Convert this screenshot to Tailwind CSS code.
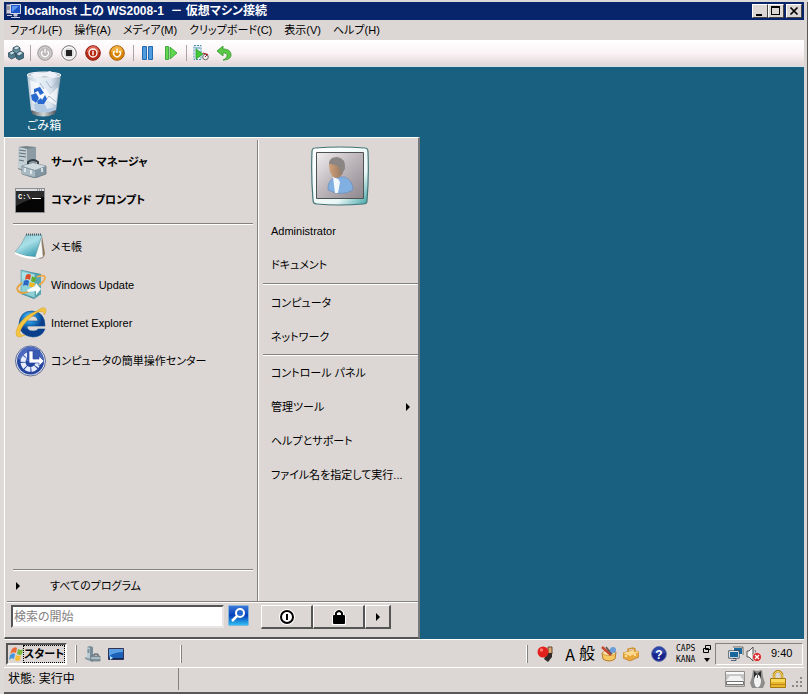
<!DOCTYPE html>
<html lang="ja">
<head>
    <meta charset="UTF-8">
    <meta name="viewport" content="width=device-width, initial-scale=1.0">
    <title>localhost 上の WS2008-1 － 仮想マシン接続</title>
    <script src="https://cdn.jsdelivr.net/npm/@tailwindcss/browser@4"></script>
</head>
<body class="min-h-screen flex flex-col bg-[#dcd7d5] border-t-2 border-l-4 border-[#dedad8] pr-1 text-xs text-black font-['Liberation_Sans','Noto_Sans_CJK_JP',sans-serif] [font-feature-settings:'palt'] shadow-[inset_-1px_-2px_0_#5a5856]">

    <!-- Title bar -->
    <header class="h-[18px] bg-[#08246b] text-white flex items-center pl-[2px] pr-[2px]">
        <svg class="w-4 h-4 shrink-0" viewBox="0 0 16 16">
            <path d="M.5 1.500h5v9h-5z" fill="#c9c9d8" stroke="#777b9a"/>
            <path d="M1 4h4M1 6h4" stroke="#666"/>
            <path d="M4.500 1.500h10v9h-10z" fill="#1c55c8" stroke="#d8dce8"/>
            <path d="M6 3h7L6 9z" fill="#5d95f0"/>
            <path d="M8 11h3v2H8zM5 14.500h9M1 12.500h5" stroke="#c8ccdd" fill="#c8ccdd"/>
        </svg>
        <h1 class="flex-1 ml-[2px] text-xs leading-4 font-bold whitespace-nowrap">localhost 上の WS2008-1 &nbsp;－ 仮想マシン接続</h1>
        <div class="flex">
            <button aria-label="最小化" class="w-4 h-[14px] bg-[#dcd7d5] border border-t-white border-l-white border-r-[#444] border-b-[#444]">
                <svg class="w-full h-full" viewBox="0 0 14 12"><path d="M3 9h6v2H3z"/></svg>
            </button>
            <button aria-label="最大化" class="w-4 h-[14px] bg-[#dcd7d5] border border-t-white border-l-white border-r-[#444] border-b-[#444]">
                <svg class="w-full h-full" viewBox="0 0 14 12"><path d="M2 1h9v9H2zM3 3v6h7V3z" fill-rule="evenodd"/></svg>
            </button>
            <button aria-label="閉じる" class="ml-[2px] w-4 h-[14px] bg-[#dcd7d5] border border-t-white border-l-white border-r-[#444] border-b-[#444]">
                <svg class="w-full h-full" viewBox="0 0 14 12"><path d="M3.500 2.500l7 7M10.500 2.500l-7 7" stroke="#000" stroke-width="1.700"/></svg>
            </button>
        </div>
    </header>

    <!-- Menu bar -->
    <nav class="h-5 flex items-center gap-3 pl-[6px] text-[11px] leading-4 whitespace-nowrap">
        <button>ファイル(F)</button>
        <button>操作(A)</button>
        <button>メディア(M)</button>
        <button>クリップボード(C)</button>
        <button>表示(V)</button>
        <button>ヘルプ(H)</button>
    </nav>

    <!-- Toolbar -->
    <div class="h-[27px] flex items-center pl-1 bg-linear-to-b from-white via-[#fbf3f5] to-[#e2d7d8] border-b border-[#d3e2e4]">
        <button aria-label="Ctrl+Alt+Del">
            <svg class="w-4 h-4" viewBox="0 0 16 16" stroke="#23414d" stroke-width=".7">
                <path d="M5 3l4-2 3 2v4L8 9 5 7z" fill="#6c97a8"/><path d="M5 3l4-2 3 2-4 2z" fill="#d5e6ec"/>
                <path d="M0.500 8l4-2 3 2v4l-4 2-3-2z" fill="#547f92"/><path d="M0.500 8l4-2 3 2-4 2z" fill="#c4dbe3"/>
                <path d="M8 9l4-3 3.500 2v5L11 15l-3-2z" fill="#426f82"/><path d="M8 9l4-3 3.500 2L11 11z" fill="#c4dbe3"/>
            </svg>
        </button>
        <span class="w-px h-4 mx-[6px] bg-[#aaa5a5]"></span>
        <div class="flex gap-2">
            <button aria-label="起動" disabled>
                <svg class="w-4 h-4" viewBox="0 0 16 16"><circle cx="8" cy="8" r="7.300" fill="#bdb8ba" stroke="#a5a0a2"/><circle cx="8" cy="8" r="5.800" fill="none" stroke="#d3cfd0"/><path d="M5.500 6a3.400 3.400 0 1 0 5 0M8 3.800v4" fill="none" stroke="#fff" stroke-width="1.300"/></svg>
            </button>
            <button aria-label="停止">
                <svg class="w-4 h-4" viewBox="0 0 16 16"><circle cx="8" cy="8" r="7.300" fill="#eee" stroke="#777"/><circle cx="8" cy="8" r="5.800" fill="#dedede" stroke="#fff"/><path d="M5 5h6v6H5z" fill="#222"/></svg>
            </button>
            <button aria-label="シャットダウン">
                <svg class="w-4 h-4" viewBox="0 0 16 16"><circle cx="8" cy="8" r="7.300" fill="#b82b17" stroke="#8c1c10"/><path d="M2 7a6 6 0 0 1 12 0q-6 2-12 0" fill="#dd6650"/><circle cx="8" cy="8" r="4" fill="#b52612" stroke="#fff" stroke-width="1.300"/><path d="M8 5.800v4.400" stroke="#fff" stroke-width="1.400"/></svg>
            </button>
            <button aria-label="電源">
                <svg class="w-4 h-4" viewBox="0 0 16 16"><circle cx="8" cy="8" r="7.300" fill="#d98406" stroke="#a65f08"/><path d="M2 7a6 6 0 0 1 12 0q-6 2-12 0" fill="#efae3e"/><path d="M5.500 6a3.400 3.400 0 1 0 5 0M8 3.500v4.500" fill="none" stroke="#fff" stroke-width="1.400"/></svg>
            </button>
        </div>
        <span class="w-px h-4 ml-2 mr-[6px] bg-[#aaa5a5]"></span>
        <div class="flex gap-2">
            <button aria-label="一時停止">
                <svg class="w-4 h-4" viewBox="0 0 16 16" fill="#4f9be0" stroke="#2468ae"><path d="M2.500 1.500h4v13h-4zM8.500 1.500h4v13h-4z"/></svg>
            </button>
            <button aria-label="リセット">
                <svg class="w-4 h-4" viewBox="0 0 16 16" fill="#62d64e" stroke="#2c9c2b" stroke-width=".8"><path d="M1.500 1.500h3v13h-3zM6 2l7 6-7 6z"/></svg>
            </button>
        </div>
        <span class="w-px h-4 mx-[6px] bg-[#aaa5a5]"></span>
        <div class="flex gap-2">
            <button aria-label="スナップショット">
                <svg class="w-4 h-4" viewBox="0 0 16 16"><path d="M1 .5h7v14H1z" fill="#e4f1f8" stroke="#4b91ad" stroke-dasharray="2 1"/><path d="M2 3h5" stroke="#4b91ad"/><path d="M3 4l7 5-7 5z" fill="#43cb37" stroke="#208a25" stroke-width=".7"/><circle cx="12.500" cy="12" r="2.800" fill="#eee" stroke="#666"/><path d="M10 8l5 1.500M12 12l2-2" stroke="#a12"/></svg>
            </button>
            <button aria-label="元に戻す">
                <svg class="w-4 h-4" viewBox="0 0 16 16"><path d="M0 6l6-5v3c5 0 8 2 8 6 0 3-3 5-8 5 3-1 4-3 4-4.500C10 8.500 9 8 6 8v3z" fill="#58c845" stroke="#32952b" stroke-width=".8"/></svg>
            </button>
        </div>
    </div>

    <!-- Guest desktop -->
    <main class="flex-1 flex flex-col justify-between items-start bg-[#195f80]">
        <a href="#" class="w-20 pt-1 flex flex-col items-center text-white">
            <svg class="w-9 h-[46px]" viewBox="0 0 36 46">
                <defs>
                    <linearGradient id="bin"><stop stop-color="#b4c6d6"/><stop offset=".3" stop-color="#e9f0f8"/><stop offset=".7" stop-color="#dbe5ef"/><stop offset="1" stop-color="#8ea5b8"/></linearGradient>
                    <linearGradient id="rim"><stop stop-color="#555b60"/><stop offset=".5" stop-color="#d5d8d8"/><stop offset="1" stop-color="#4c5358"/></linearGradient>
                </defs>
                <path d="M1 3l4 37q13 6 25 0l5-37z" fill="url(#bin)"/>
                <path d="M4 9l9 4-3 7 9-3 5 7 8-8-2 18-9-5-7 6-8-4z" fill="#fff" opacity=".7"/>
                <path d="M20 10l5 7 6-5M17 33l6-8 7 6M14 12l4 6" fill="none" stroke="#a9bacb" stroke-width="1"/>
                <path d="M8 33l9-3 4 8 9-2-1 4q-11 4-20 0z" fill="#b3cae4"/>
                <ellipse cx="18" cy="4" rx="17" ry="3" fill="#b4c3ce" stroke="#eef3f6"/>
                <path d="M4 4l6-3 8 1 6-2 8 4-5 3-8-2-9 2z" fill="#eef2f8"/>
                <path d="M5 39q13 5 25 0l-1 4q-12 5-23 0z" fill="url(#rim)"/>
                <g fill="#2869cf"><path d="M8 18l6-2 4 6-4 2-2-4-4 2z"/><path d="M5 24l5-2 3 5-3 5-4-3z"/><path d="M11 30l4-3 1 2 3-5 2 4-3 5-6 0z"/></g>
            </svg>
            <span class="mt-px leading-4">ごみ箱</span>
        </a>

        <!-- Start menu -->
        <section class="w-[416px] h-[502px] flex flex-col bg-[#dcd7d5] border-t border-l border-white border-r-2 border-b-2 border-r-[#77797a] border-b-[#555] p-[2px] pr-0">
            <div class="flex-1 flex">
                <div class="w-[251px] flex flex-col border-r border-[#858180] pl-[6px] pr-1 text-[11px] whitespace-nowrap">
                    <a href="#" class="h-[38px] mt-[3px] flex items-center pl-[2px] gap-1 font-bold">
                        <svg class="w-8 h-8" viewBox="0 0 32 32">
                            <path d="M3 1l8-1 10 1v23l-8 3-10-4z" fill="#78858b"/><path d="M3 1l9 2v22l-9-3z" fill="#c3cfd4"/><path d="M12 3l9-2v22l-9 3z" fill="#8d9ca4"/>
                            <path d="M4 4l7 1M4 7l7 1M4 10l7 1M4 14l5 1" stroke="#5f6f78" stroke-width="1.200"/>
                            <path d="M13 19v-3q5-4 10 0v3" fill="none" stroke="#343d43" stroke-width="2"/>
                            <path d="M7 20l11-3 13 3v8l-11 4-13-4z" fill="#8297a2" stroke="#5c707a" stroke-width=".7"/><path d="M7 20l11-3 13 3-11 4z" fill="#cfdade"/><path d="M7 21l13 4v6L7 28z" fill="#a9bac3"/><path d="M10 22v4M16 24v4M27 22v4" stroke="#eef3f5" stroke-width="1.500"/>
                        </svg>
                        サーバー マネージャ
                    </a>
                    <a href="#" class="h-[38px] flex items-center pl-[2px] gap-1 font-bold">
                        <svg class="w-8 h-8" viewBox="0 0 32 32">
                            <path d="M.5 4.500h29v24H.5z" fill="#050505" stroke="#8c8e92"/><path d="M1 5h28v2H1z" fill="#dadde1"/><path d="M22 6h6" stroke="#555" stroke-dasharray="1 1"/><path d="M1 7h28v6Q14 14 1 22z" fill="#2b2b2b"/>
                            <text x="3" y="15" font-size="7" fill="#fff" font-family="Liberation Mono">C:\</text><path d="M17 14.500h9" stroke="#fff"/>
                        </svg>
                        コマンド プロンプト
                    </a>
                    <hr class="mt-1 mb-[3px] border-t border-[#858180] border-b border-b-white">
                    <a href="#" class="h-[38px] flex items-center pl-[2px] gap-1">
                        <svg class="w-8 h-8" viewBox="0 0 32 32">
                            <defs><linearGradient id="note" x2=".6" y2="1"><stop stop-color="#8dc5cf"/><stop offset=".5" stop-color="#a9e0e8"/><stop offset="1" stop-color="#3f9fb4"/></linearGradient></defs>
                            <path d="M27 5l3 18-2 4-4 1z" fill="#8d7453"/><path d="M26 4l2 22-9 3z" fill="#f4f7f5" stroke="#aab" stroke-width=".5"/>
                            <path d="M11 4h16l-7 22q-10 0-20-5Q7 14 11 4z" fill="url(#note)" stroke="#6b9fa9" stroke-width=".7"/>
                            <path d="M11 3.500h16" stroke="#4d5e62" stroke-width="2" stroke-dasharray="1 1"/><path d="M0 21q10 5 20 5v2Q9 28 0 23" fill="#fff"/>
                        </svg>
                        メモ帳
                    </a>
                    <a href="#" class="h-[38px] flex items-center pl-[2px] gap-1">
                        <svg class="w-8 h-8" viewBox="0 0 32 32">
                            <path d="M6 1l15 3 5 1v20l-7 5-13-5z" fill="#3b929d"/><path d="M6 1l14 4v24L6 24z" fill="#8ed0d8" stroke="#5b9ba5" stroke-width=".6"/><path d="M20 5l6 1v19l-6 4z" fill="#57a6b0"/><path d="M7 3l12 3v8L7 10z" fill="#bce8eb" opacity=".7"/>
                            <path d="M11 6q3-2 5 0l-1 5q-3-2-5 0z" fill="#dc4c28"/><path d="M17 7q2 2 4 1l-1 5q-2 1-4-1z" fill="#67ab2e"/><path d="M9 12q3-2 5 0l-1 5q-2-2-5 0z" fill="#2d63c4"/><path d="M15 13q3 2 5 1l-1 4q-3 1-5-1z" fill="#f2b621"/>
                            <path d="M7 14q-7 5-4 8 4 4 12 0" fill="none" stroke="#e6a23a" stroke-width="1.800"/><path d="M22 8q8-3 8 1-1 4-6 7" fill="none" stroke="#eeaa48" stroke-width="1.800"/><path d="M12 21l8-4 1-3 5 6-5 6v-4l-8 1z" fill="#f8fcfa"/>
                        </svg>
                        Windows Update
                    </a>
                    <a href="#" class="h-[38px] flex items-center pl-[2px] gap-1">
                        <svg class="w-8 h-8" viewBox="0 0 32 32">
                            <defs><radialGradient id="ie" cx=".4" cy=".25"><stop stop-color="#6ccafa"/><stop offset=".5" stop-color="#1d84cf"/><stop offset="1" stop-color="#0b3f8c"/></radialGradient></defs>
                            <path d="M30 19H12q0 5 6 5 4 0 5-2h7q-3 8-12 8-13-1-14-13Q5 4 17 4q13 1 13 15M12 14h11q-1-5-5-5-5 0-6 5" fill="url(#ie)" fill-rule="evenodd" stroke="#0c4b90" stroke-width=".6"/>
                            <path d="M22 4q8-6 9-1 0 3-2 5 1-5-6-3Q10 13 5 24q-1 5 5 4-9 5-9-2C2 16 12 7 22 4" fill="#f4c640" stroke="#d79a25" stroke-width=".5"/>
                        </svg>
                        Internet Explorer
                    </a>
                    <a href="#" class="h-[38px] flex items-center pl-[2px] gap-1">
                        <svg class="w-8 h-8" viewBox="0 0 32 32">
                            <circle cx="15.500" cy="16" r="15" fill="#dfe4ef" stroke="#5d6b94"/><circle cx="15.500" cy="16" r="13.500" fill="#2444a0"/><path d="M3 14a12.500 12.500 0 0 1 25 0q-12 5-25 0" fill="#4c69bd"/>
                            <circle cx="15.500" cy="17" r="7.500" fill="none" stroke="#e8edfc" stroke-width="5" stroke-dasharray="4.900 1"/>
                            <path d="M12 5h13v10H12z" fill="#3a59b1"/>
                            <path d="M14 6h4v8h6v-3l5 5-5 5v-3H14z" fill="#fff" stroke="#2b4aa6" stroke-width=".7"/>
                        </svg>
                        コンピュータの簡単操作センター
                    </a>
                    <hr class="mt-auto border-t border-[#858180] border-b border-b-white">
                    <button class="h-[30px] flex items-center pl-[3px]">
                        <svg class="w-1 h-2 mr-[30px]" viewBox="0 0 4 8"><path d="M0 0l4 4-4 4z"/></svg>
                        すべてのプログラム
                    </button>
                </div>
                <div class="flex-1 flex flex-col border-l border-white pl-1 text-[11px] whitespace-nowrap">
                    <svg class="w-[60px] h-[60px] mt-[6px] ml-[47px] mb-2" viewBox="0 0 60 60">
                        <defs>
                            <linearGradient id="frame" x2="1" y2="1"><stop stop-color="#fff"/><stop offset=".7" stop-color="#e9f7f6"/><stop offset="1" stop-color="#39a1a4"/></linearGradient>
                            <linearGradient id="pic" x2="1" y2="1"><stop stop-color="#f1eff0"/><stop offset=".5" stop-color="#bbb4b9"/><stop offset="1" stop-color="#8d878e"/></linearGradient>
                            <linearGradient id="face"><stop stop-color="#d1a27b"/><stop offset="1" stop-color="#8f735d"/></linearGradient>
                        </defs>
                        <path d="M5 2q25-2 50 0 3 0 3 4 1 25-1 49 0 3-4 3-24 2-46 0-4 0-4-4-2-24-1-48 0-4 3-4z" fill="url(#frame)" stroke="#467477" stroke-width="1.200"/>
                        <path d="M6.500 6.500h47v46h-47z" fill="url(#pic)" stroke="#4e5354"/>
                        <path d="M18 44q-1-11 9-13h8q8 4 8 13-12 7-25 0" fill="#82afe2" stroke="#6388b6" stroke-width=".6"/><path d="M23 31l5 2 2 3-2 11h-3z" fill="#f3f8fd"/>
                        <path d="M19 20q0-8 8-8 8 1 7 11-2 9-8 9-6-1-7-12" fill="url(#face)"/><path d="M19 18q0-7 8-7 9 1 8 12l-4 5-2-7q-4-3-10-3" fill="#8b8683"/>
                    </svg>
                    <a href="#" class="h-[34px] flex items-center pl-2">Administrator</a>
                    <a href="#" class="h-[34px] flex items-center pl-2">ドキュメント</a>
                    <hr class="my-px border-t border-[#858180] border-b border-b-white">
                    <a href="#" class="h-[34px] flex items-center pl-2">コンピュータ</a>
                    <a href="#" class="h-[34px] flex items-center pl-2">ネットワーク</a>
                    <hr class="border-t border-[#858180] border-b border-b-white">
                    <a href="#" class="h-[34px] flex items-center pl-2">コントロール パネル</a>
                    <a href="#" class="h-[34px] flex items-center justify-between pl-2 pr-2">
                        管理ツール
                        <svg class="w-1 h-2" viewBox="0 0 4 8"><path d="M0 0l4 4-4 4z"/></svg>
                    </a>
                    <a href="#" class="h-[34px] flex items-center pl-2">ヘルプとサポート</a>
                    <a href="#" class="h-[34px] flex items-center pl-2">ファイル名を指定して実行...</a>
                </div>
            </div>
            <div class="h-[34px] flex items-start pt-[3px] pl-1 border-t border-[#858180] shadow-[inset_0_1px_0_#fff]">
                <input type="text" aria-label="検索の開始" placeholder="検索の開始" class="w-[213px] h-[23px] px-px text-xs bg-white border-2 border-t-[#555] border-l-[#555] border-r-[#e9e5e4] border-b-[#e9e5e4] placeholder:text-[#85817f]">
                <button aria-label="検索" class="ml-1">
                    <svg class="w-[21px] h-[21px]" viewBox="0 0 21 21">
                        <defs><linearGradient id="find" x2="0" y2="1"><stop stop-color="#3d7ad8"/><stop offset=".5" stop-color="#0640bb"/><stop offset="1" stop-color="#30c4f3"/></linearGradient></defs>
                        <rect x=".5" y=".5" width="20" height="20" rx="1" fill="url(#find)" stroke="#83b5df"/><circle cx="12" cy="8" r="4" fill="#2467ce" stroke="#fff" stroke-width="2"/><path d="M9 11l-5 5" stroke="#fff" stroke-width="2.500"/>
                    </svg>
                </button>
                <div class="ml-3 flex">
                    <button aria-label="電源" class="w-[52px] h-6 flex items-center justify-center border border-t-white border-l-white border-r-2 border-b-2 border-r-[#555] border-b-[#555]">
                        <svg class="w-4 h-4" viewBox="0 0 16 16"><circle cx="8" cy="8" r="8" fill="#fff"/><circle cx="8" cy="8" r="6" fill="none" stroke="#000" stroke-width="2"/><path d="M8 5v6" stroke="#000" stroke-width="2"/></svg>
                    </button>
                    <button aria-label="ロック" class="w-[52px] h-6 flex items-center justify-center border border-t-white border-l-white border-r-2 border-b-2 border-r-[#555] border-b-[#555]">
                        <svg class="w-4 h-4" viewBox="0 0 16 16"><path d="M3 7V3q5-6 10 0v3h2v10H1V6z" fill="#fff"/><path d="M5 8V4q3-4 6 0v4" fill="none" stroke="#000" stroke-width="2"/><rect x="2" y="6" width="12" height="9" rx="1"/></svg>
                    </button>
                    <button aria-label="その他" class="w-[26px] h-6 flex items-center justify-center border border-t-white border-l-white border-r-2 border-b-2 border-r-[#555] border-b-[#555]">
                        <svg class="w-1 h-2" viewBox="0 0 4 8"><path d="M0 0l4 4-4 4z"/></svg>
                    </button>
                </div>
            </div>
        </section>
    </main>

    <!-- Taskbar -->
    <div class="h-7 flex items-center pl-[2px] pr-px border-t border-white">
        <button class="w-[61px] h-[22px] flex items-center pl-px border-2 border-t-[#555] border-l-[#555] border-r-white border-b-white font-bold text-[11px] whitespace-nowrap">
            <svg class="w-[15px] h-4 shrink-0" viewBox="0 0 15 16"><path d="M3 3q3-3 5-1L7 7Q4 5 1 8z" fill="#eb6a35"/><path d="M9 3q3 2 5 0l-1 5q-2 2-5 0z" fill="#79b83d"/><path d="M1 9q3-3 5-1l-1 5q-3-2-5 1z" fill="#4694dc"/><path d="M7 9q3 2 5 0l-1 5q-3 2-5 0z" fill="#f5bd38"/></svg>
            <span class="outline-1 outline-dotted outline-black leading-4">スタート</span>
        </button>
        <span class="w-[2px] h-[18px] ml-2 bg-white border-r border-[#858180]"></span>
        <button aria-label="サーバー マネージャ" class="ml-2">
            <svg class="w-4 h-4" viewBox="0 0 16 16"><path d="M2 1l3-1 3 1v11l-3 2-3-2z" fill="#788d99"/><path d="M2 1l3 1v11l-3-1z" fill="#b9ccd5"/><path d="M2.500 4h2M2.500 6h2" stroke="#465b66"/><path d="M0 12l8 3" stroke="#8b9ca4" stroke-width="2"/><path d="M9 10V8h4v2" fill="none" stroke="#3f4d54"/><path d="M6 10h9v5H6z" fill="#8396a0" stroke="#5b6c75" stroke-width=".6"/><path d="M6 12h9" stroke="#d7e0e4"/></svg>
        </button>
        <button aria-label="デスクトップの表示" class="ml-[7px]">
            <svg class="w-4 h-4" viewBox="0 0 16 16"><path d="M.5 2.500h15v11H.5z" fill="#1d60b8" stroke="#335"/><path d="M1 3h14v3Q7 6 1 10z" fill="#5a9ee4"/><path d="M1 12h14v1H1z" fill="#0c2a5a"/><path d="M2 10l3 2-3 2z" fill="#aee6ff"/></svg>
        </button>
        <span class="w-[2px] h-[18px] ml-14 bg-white border-r border-[#858180]"></span>

        <!-- Language bar -->
        <span class="w-[2px] h-[18px] ml-auto bg-white border-r border-[#858180]"></span>
        <button aria-label="IME" class="ml-[9px]">
            <svg class="w-4 h-4" viewBox="0 0 16 16"><path d="M11 1h4v7h-4z" fill="#d6a96d" stroke="#643"/><path d="M10 7h5v4l-4 5-4-3z" fill="#302b29"/><circle cx="6" cy="6" r="5.500" fill="#e2201c"/><circle cx="4.500" cy="4" r="1.700" fill="#ff796d"/></svg>
        </button>
        <button class="ml-3 text-base leading-5 font-['Noto_Sans_CJK_JP',sans-serif]">A</button>
        <button class="ml-1 text-base leading-5 whitespace-nowrap">般</button>
        <button aria-label="IME パッド" class="ml-[6px]">
            <svg class="w-4 h-4" viewBox="0 0 16 16"><path d="M1 7l14-1-1 7q-6 4-12 0z" fill="#f5c860" stroke="#b97c27"/><ellipse cx="8" cy="7" rx="6.500" ry="2.500" fill="#fae4a8" stroke="#b97c27" stroke-width=".6"/><path d="M1 1l9 8" stroke="#c64231" stroke-width="2.500"/><path d="M5 1l6 7" stroke="#555" stroke-width="1.500"/><circle cx="12" cy="4" r="3" fill="#6b9ddc"/></svg>
        </button>
        <button aria-label="ツール" class="ml-[6px]">
            <svg class="w-4 h-4" viewBox="0 0 16 16"><path d="M0 7l10-3 6 2v5l-9 4-7-3z" fill="#e9a83e" stroke="#b7782b" stroke-width=".7"/><path d="M0 7l10-3 6 2-9 4z" fill="#fbd98d"/><path d="M5 6V3l5-1 2 1v3" fill="none" stroke="#cf922f" stroke-width="1.500"/><path d="M3 9v2M12 8v2" stroke="#fff2bd" stroke-width="1.500"/></svg>
        </button>
        <button aria-label="ヘルプ" class="ml-3">
            <svg class="w-4 h-4" viewBox="0 0 16 16"><circle cx="8" cy="8" r="7.400" fill="#16248c" stroke="#6974a9"/><path d="M2 7a6 6 0 0 1 12 0q-6 2-12 0" fill="#3049ac"/><text x="8" y="12.500" text-anchor="middle" font-size="12" font-weight="bold" fill="#fff">?</text></svg>
        </button>
        <div class="ml-[9px] w-5 text-[8px] leading-[11px] font-['DejaVu_Sans_Mono',monospace]">
            <button class="block">CAPS</button>
            <button class="block">KANA</button>
        </div>
        <div class="ml-[7px] flex flex-col items-center gap-1">
            <button aria-label="元に戻す"><svg class="block w-2 h-2" viewBox="0 0 8 8"><path d="M2.500.5h5v4h-5zM.5 3.500h5v4h-5z" fill="#dcd7d5" stroke="#000"/></svg></button>
            <button aria-label="オプション"><svg class="block w-[6px] h-[6px]" viewBox="0 0 6 6"><path d="M0 1h6L3 5z"/></svg></button>
        </div>

        <!-- Notification area -->
        <div class="ml-1 w-[88px] h-[22px] flex items-center pl-3 border border-t-[#858180] border-l-[#858180] border-r-white border-b-white">
            <svg class="w-4 h-4" viewBox="0 0 16 16"><path d="M5.500 1.500h9v7h-9z" fill="#1c6a9d" stroke="#eee"/><path d="M5 1h10v8" fill="none" stroke="#333" stroke-width=".7"/><path d="M1.500 5.500h9v6h-9z" fill="#17679d" stroke="#fff"/><path d="M.7 4.700h10.500v7.500H.7zM5 12.500h3v2H3" fill="none" stroke="#345" stroke-width=".8"/></svg>
            <svg class="w-4 h-4 ml-[2px]" viewBox="0 0 16 16"><path d="M1 5h2l4-4v14l-4-4H1z" fill="#f5f5f5" stroke="#555"/><path d="M9 4q2 3 0 7" fill="none" stroke="#777"/><circle cx="11" cy="11" r="4.500" fill="#d52b2b" stroke="#fff" stroke-width=".6"/><path d="M9 9l4 4M13 9l-4 4" stroke="#fff" stroke-width="1.400"/></svg>
            <time class="ml-[9px] text-[11px]">9:40</time>
        </div>
    </div>

    <!-- Status bar -->
    <footer class="h-[27px] flex items-start border-t border-white">
        <p class="w-[175px] h-[22px] flex items-center pl-1 border-r border-[#858180]">状態: 実行中</p>
        <div class="ml-auto flex items-center gap-[5px] pt-[2px] pr-px">
            <svg class="w-5 h-[18px]" viewBox="0 0 20 18"><path d="M.5 1.500h19v15H.5z" fill="#c9c7c6" stroke="#92908f"/><path d="M1 2h18v2H1z" fill="#f9f9f9"/><path d="M5 6h10l4 5H1z" fill="#f2f2f2"/><path d="M1.500 11.500h17v3h-17z" fill="#fff" stroke="#555" stroke-width=".8"/></svg>
            <svg class="w-[15px] h-[18px]" viewBox="0 0 15 18"><path d="M3 0l4 1 5-1 1 7 2 6-2 5H2l-2-5 2-6z" fill="#8f8d8c"/><path d="M4 1l3 3 4-3v9l-3 4-4-4z" fill="#2b2b2b"/><ellipse cx="7.500" cy="11" rx="3.500" ry="6.500" fill="#f2f2f2"/><path d="M7 5h1v3H7z" fill="#555"/></svg>
            <svg class="w-4 h-[18px]" viewBox="0 0 16 18"><path d="M4 9V4q4-6 8 0v5" fill="none" stroke="#b98914" stroke-width="2.500"/><path d="M4 8V4q4-5 8 0v4" fill="none" stroke="#f7dd6b"/><path d="M.5 8.500h15v9H.5z" fill="#e9b72d" stroke="#a67912"/><path d="M1 9h14v3H1z" fill="#f8d958"/><path d="M1 14.500h14" stroke="#bd8615"/></svg>
            <svg class="w-3 h-3 self-end" viewBox="0 0 12 12" fill="#8b8785"><path d="M9 1h2v2H9zM5 5h2v2H5zM9 5h2v2H9zM1 9h2v2H1zM5 9h2v2H5zM9 9h2v2H9z"/></svg>
        </div>
    </footer>
</body>
</html>
